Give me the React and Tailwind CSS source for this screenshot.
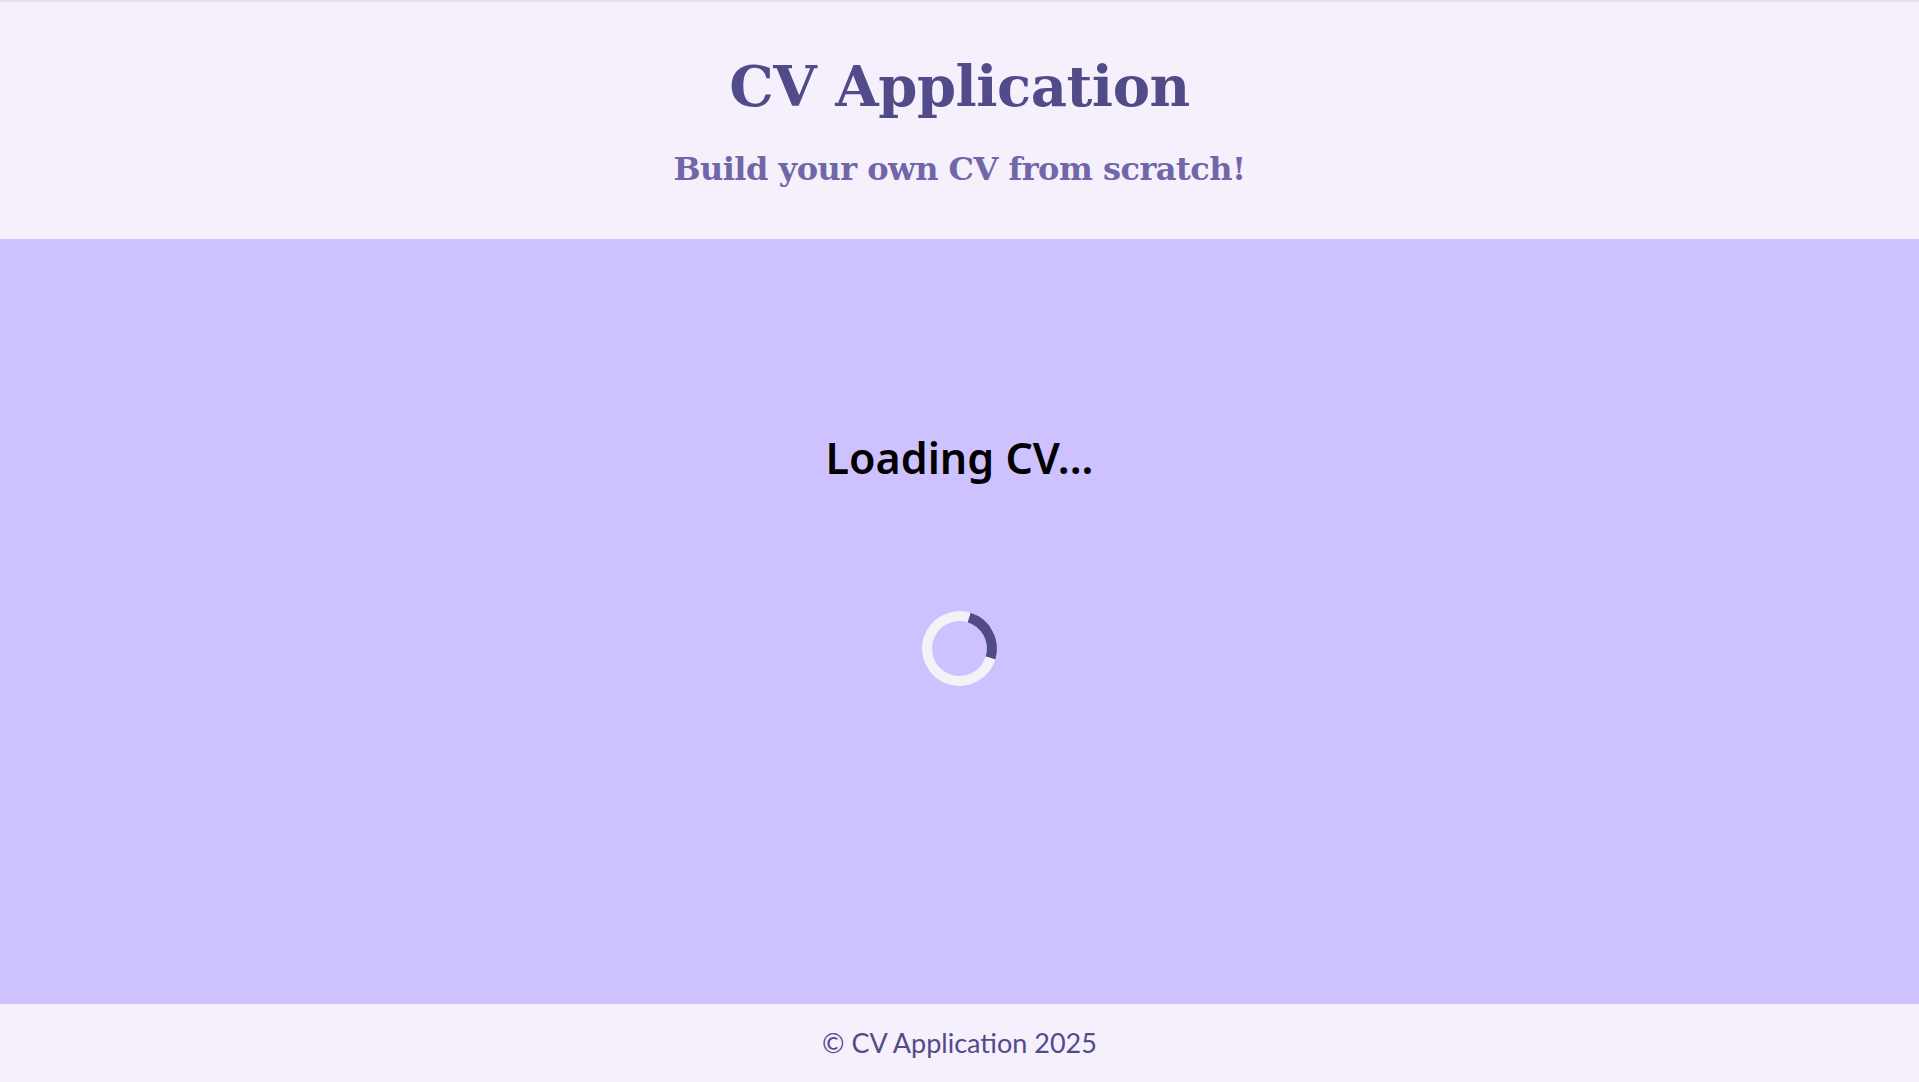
import React from 'react';

export default function App() {
  return (
    <div className="min-h-screen flex flex-col border-t-2 border-[#e3e1e8] bg-[#f6f0fd]">
      <header className="h-[237px] flex flex-col items-center bg-[#f6f0fd] font-['DejaVu_Serif',serif]">
        <h1 className="mt-[44px] text-[56px] leading-[80px] font-bold text-[#524b8a] tracking-[-0.5px]">CV Application</h1>
        <h2 className="mt-[22px] text-[32px] leading-[42px] font-bold text-[#7067a8] tracking-[-0.5px]">Build your own CV from scratch!</h2>
      </header>

      <main className="flex-1 flex flex-col items-center bg-[#cdc2ff] pt-[194px]">
        <h3 className="text-[43px] leading-[50px] font-semibold text-black font-['Noto_Sans',sans-serif]">Loading CV...</h3>
        <div className="mt-[128px] h-[75px] w-[75px] rounded-full border-[10px] border-[#f3f2f6] border-t-[#524b8a] rotate-[62deg]"></div>
      </main>

      <footer className="h-[78px] flex items-center justify-center bg-[#f6f0fd]">
        <p className="text-[27px] text-[#524b8a] font-['Lato',sans-serif]">© CV Application 2025</p>
      </footer>
    </div>
  );
}
